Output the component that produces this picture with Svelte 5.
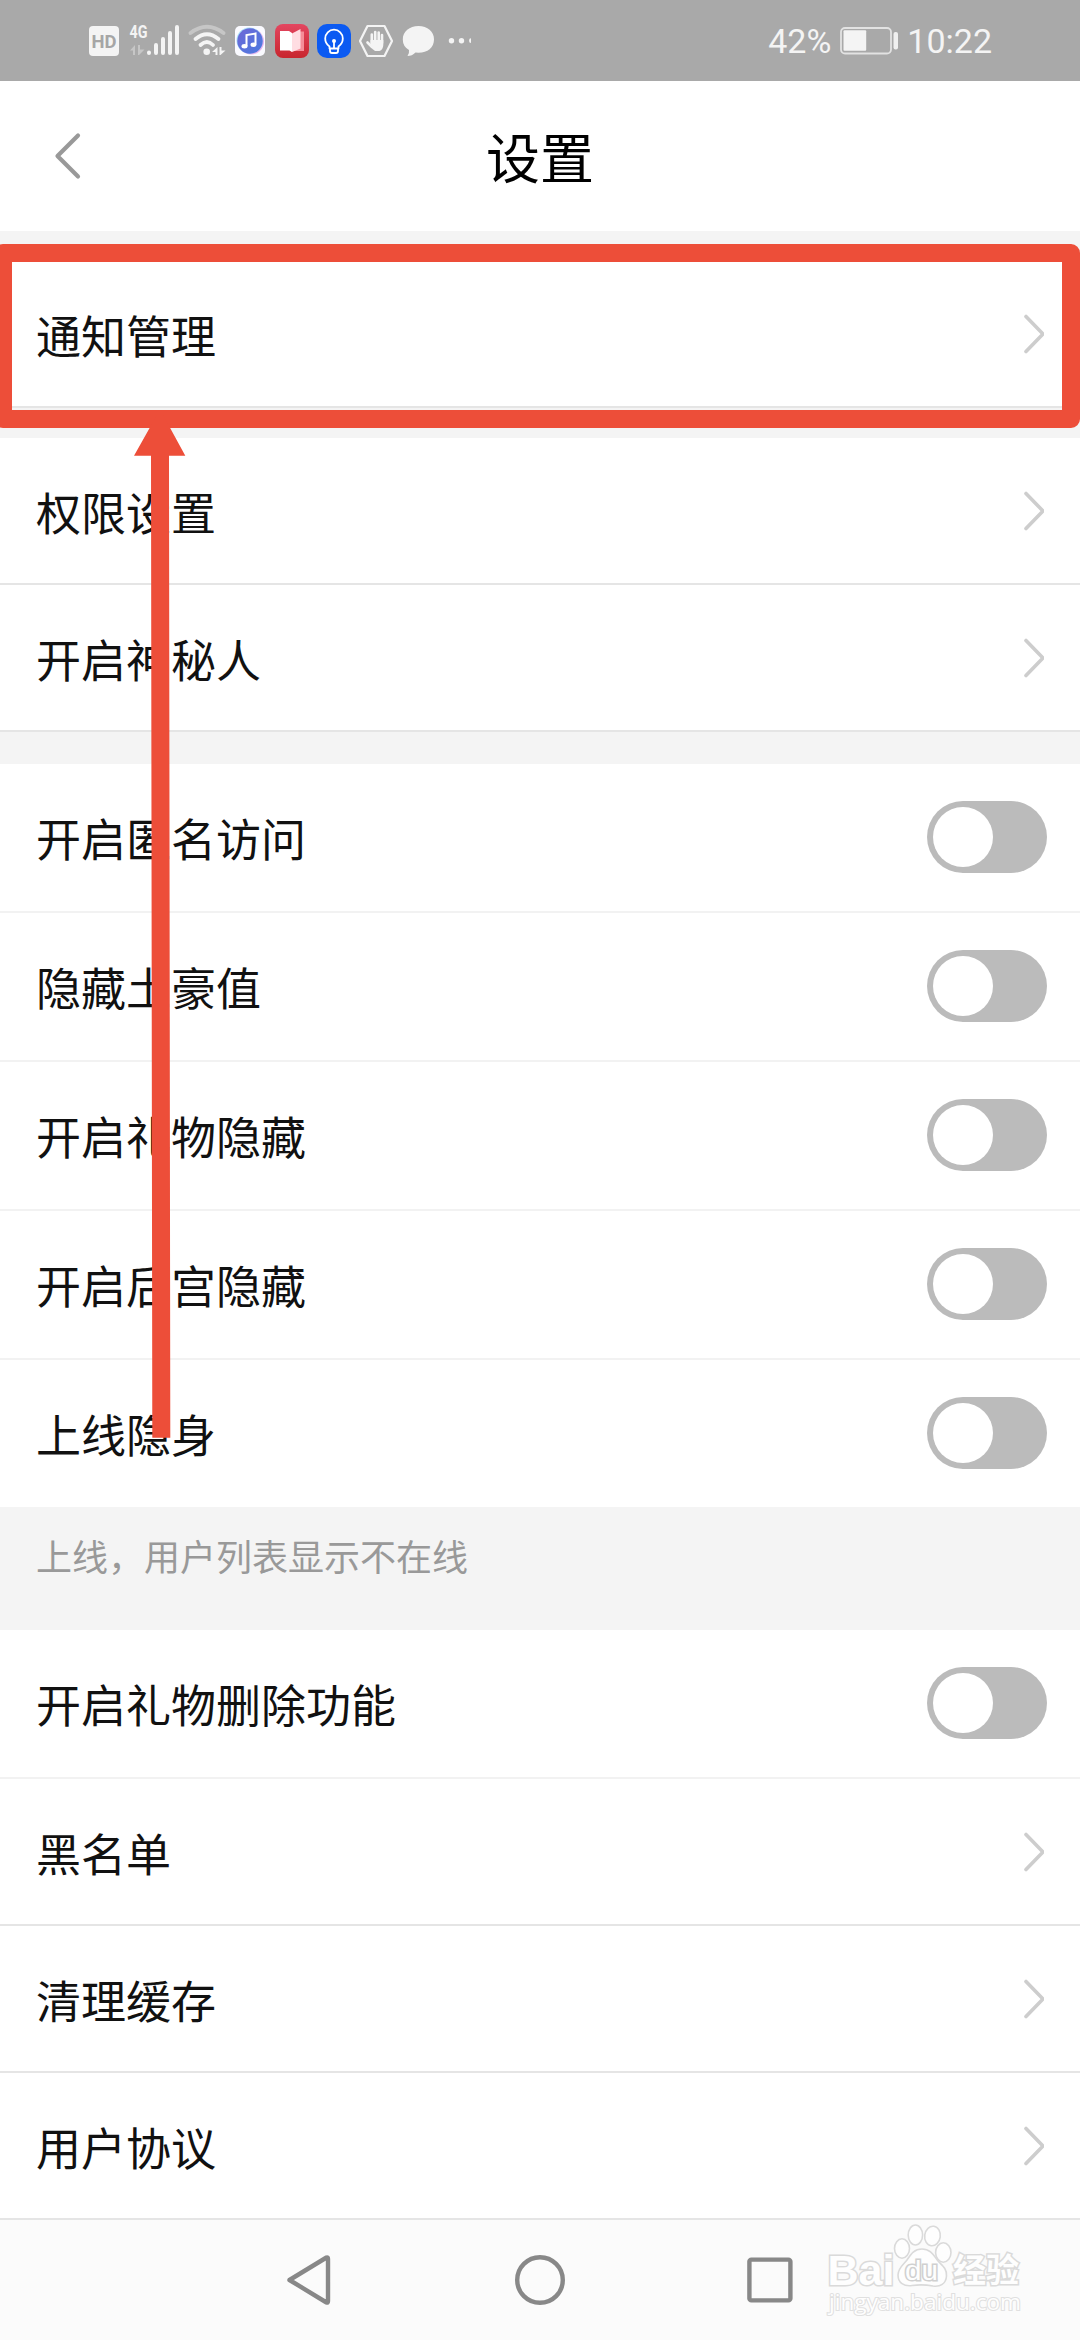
<script lang="ts">
  type Row = { label: string; kind: 'link' | 'switch' };

  const notifyRows: Row[] = [{ label: '通知管理', kind: 'link' }];

  const accessRows: Row[] = [
    { label: '权限设置', kind: 'link' },
    { label: '开启神秘人', kind: 'link' },
  ];

  const privacyRows: Row[] = [
    { label: '开启匿名访问', kind: 'switch' },
    { label: '隐藏土豪值', kind: 'switch' },
    { label: '开启礼物隐藏', kind: 'switch' },
    { label: '开启后宫隐藏', kind: 'switch' },
    { label: '上线隐身', kind: 'switch' },
  ];

  const otherRows: Row[] = [
    { label: '开启礼物删除功能', kind: 'switch' },
    { label: '黑名单', kind: 'link' },
    { label: '清理缓存', kind: 'link' },
    { label: '用户协议', kind: 'link' },
  ];

  let enabled = $state<Record<string, boolean>>({});

  function toggle(label: string) {
    enabled[label] = !enabled[label];
  }
</script>

{#snippet rowList(rows: Row[])}
  {#each rows as row (row.label)}
    <div class="row {row.kind}">
      <span class="label">{row.label}</span>
      {#if row.kind === 'switch'}
        <button
          class="switch"
          class:on={enabled[row.label]}
          type="button"
          role="switch"
          aria-checked={!!enabled[row.label]}
          aria-label={row.label}
          onclick={() => toggle(row.label)}
        >
          <span class="knob"></span>
        </button>
      {:else}
        <svg class="chevron" width="20" height="40" viewBox="0 0 20 40">
          <path d="M2 2.5 L19 20 L2 37.5" fill="none" stroke="#cdcdcd" stroke-width="3.6" stroke-linecap="round" />
        </svg>
      {/if}
    </div>
  {/each}
{/snippet}

<div class="screen">
  <!-- Status bar -->
  <div class="status-bar">
    <div class="status-icons">
      <svg width="31" height="40" viewBox="89 21 31 40">
        <rect x="89" y="26" width="30" height="30" rx="4" fill="#f4f4f4" />
        <text x="91.5" y="48.2" font-size="19" font-weight="700" fill="#a6a6a6" textLength="25" lengthAdjust="spacingAndGlyphs">HD</text>
      </svg>
      <svg width="52" height="40" viewBox="128 21 52 40">
        <text x="129.5" y="38" font-size="18" font-weight="700" fill="#f4f4f4" textLength="18" lengthAdjust="spacingAndGlyphs">4G</text>
        <path d="M130 50.5 L135 45 V55 H133 V50.5 Z M138 45 H140 V49.5 H144.5 L139 55 H138 Z" fill="#c6c6c6" />
        <g stroke="#f4f4f4" stroke-width="4" stroke-linecap="round">
          <path d="M149 52.5 V53 M156 45 V53 M163 39 V53 M170 33 V53 M177 27 V53" />
        </g>
      </svg>
      <svg width="38" height="40" viewBox="188 21 38 40">
        <g fill="none" stroke-width="3.8" stroke-linecap="round">
          <path d="M190.5 33 Q207 20.5 223.5 33" stroke="#c6c6c6" />
          <path d="M195.5 39 Q207 29.5 218.5 39" stroke="#f4f4f4" />
          <path d="M200.500 45 Q207 39 213 45" stroke="#f4f4f4" />
        </g>
        <circle cx="206.7" cy="51.8" r="3.3" fill="#f4f4f4" />
        <path d="M212 52 L217.5 47 V55 H215.5 V52 Z M219.5 47 H221.500 V50.5 H225.5 L220.5 55 H219.5 Z" fill="#f4f4f4" />
      </svg>
      <svg width="32" height="40" viewBox="234 21 32 40">
        <defs>
          <linearGradient id="disc" x1="0" y1="0" x2="1" y2="1">
            <stop offset="0" stop-color="#6f66d6" />
            <stop offset="1" stop-color="#4a7be0" />
          </linearGradient>
        </defs>
        <rect x="235" y="26" width="30" height="30" rx="5" fill="#fafaff" />
        <circle cx="251" cy="41.5" r="13" fill="#e7b4ee" />
        <circle cx="249.5" cy="40.5" r="13" fill="#a5dcf5" />
        <circle cx="250" cy="41" r="12.7" fill="url(#disc)" />
        <path d="M246.5 46 V35 L255.500 33.5 V44.5" fill="none" stroke="#fff" stroke-width="2" />
        <ellipse cx="244.5" cy="46.3" rx="3" ry="2.2" fill="#fff" />
        <ellipse cx="253.5" cy="44.8" rx="3" ry="2.2" fill="#fff" />
      </svg>
      <svg width="35" height="40" viewBox="274 21 35 40">
        <defs>
          <linearGradient id="cover" x1="0" y1="0" x2="0" y2="1">
            <stop offset="0" stop-color="#e34660" />
            <stop offset="1" stop-color="#c8262e" />
          </linearGradient>
        </defs>
        <rect x="275" y="24" width="34" height="34" rx="8" fill="url(#cover)" />
        <path d="M300 31.5 H304 V51 H293 Z" fill="#f58d98" />
        <path d="M280 31 H289 L292 33 V52 L289.5 50.5 H280 Z" fill="#fff" />
        <path d="M292 33.5 L300.5 29 V48.5 L292 52 Z" fill="#ffdde2" />
      </svg>
      <svg width="34" height="40" viewBox="317 21 34 40">
        <rect x="317" y="24" width="34" height="34" rx="10" fill="#0b5af2" />
        <g fill="none" stroke="#fff" stroke-width="1.8" stroke-linecap="round" stroke-linejoin="round">
          <path d="M329.500 48.5 V46.5 Q325.2 43.5 325.2 38.5 A8.8 8.8 0 0 1 342.8 38.5 Q342.8 43.5 338.5 46.5 V48.5 Z" />
          <path d="M330 49 V51 Q330 53 332 53 H336 Q338 53 338 51 V49 M334 48 V42" />
        </g>
        <circle cx="334" cy="41" r="2" fill="#fff" />
      </svg>
      <svg width="34" height="40" viewBox="359 21 34 40">
        <path d="M367.5 26 H384.5 L392 41 L384.5 56 H367.5 L360 41 Z" fill="none" stroke="#f4f4f4" stroke-width="2.2" stroke-linejoin="round" />
        <g fill="none" stroke="#f4f4f4" stroke-width="2.6" stroke-linecap="round">
          <path d="M371.8 43 V34.5 M375.2 42 V32 M378.7 42 V32.5 M382 43 V35" />
          <path d="M372 47 L367.5 42.500" />
        </g>
        <path d="M370.5 40 H383.3 V45 Q383 50 379.5 51 H375 Q372.5 50 370.5 46 Z" fill="#f4f4f4" />
      </svg>
      <svg width="34" height="40" viewBox="401 21 34 40">
        <path d="M418.5 26 C427.5 26 434 31.5 434 39.5 C434 47.5 427.5 52.8 418.5 52.8 L415.5 52.5 Q412 56 407.5 56 Q409.5 53.5 409 50 Q402.8 46.5 402.8 39.5 C402.8 31.5 409.5 26 418.5 26 Z" fill="#f4f4f4" />
      </svg>
      <svg width="28" height="40" viewBox="443 21 28 40">
        <circle cx="451.5" cy="40.7" r="2.7" fill="#f4f4f4" />
        <circle cx="461.5" cy="40.7" r="2.7" fill="#f4f4f4" />
        <path d="M471 38.3 Q469 38.3 469 40.7 Q469 43 471 43 Z" fill="#f4f4f4" />
      </svg>
    </div>
    <div class="status-info">
      <span>42%</span>
      <svg width="60" height="40" viewBox="839 21 60 40">
        <rect x="841" y="28" width="50" height="25.5" rx="4" fill="none" stroke="#e2e2e2" stroke-width="1.8" />
        <rect x="843.5" y="30.3" width="22.7" height="20.5" rx="1" fill="#f4f4f4" />
        <rect x="893.5" y="32" width="4.5" height="17.5" rx="2" fill="#f0f0f0" />
      </svg>
      <span>10:22</span>
    </div>
  </div>

  <!-- Header -->
  <header class="header">
    <button class="back" type="button" aria-label="返回">
      <svg width="30" height="50" viewBox="0 0 30 50">
        <path d="M24 4.5 L3.5 25 L24 45.5" fill="none" stroke="#999" stroke-width="4.2" stroke-linecap="round" stroke-linejoin="round" />
      </svg>
    </button>
    <h1>设置</h1>
  </header>

  <!-- Settings -->
  <main>
    <section class="group">{@render rowList(notifyRows)}</section>
    <section class="group">{@render rowList(accessRows)}</section>
    <section class="group privacy">{@render rowList(privacyRows)}</section>
    <p class="hint">上线，用户列表显示不在线</p>
    <section class="group">{@render rowList(otherRows)}</section>
  </main>

  <!-- System navigation -->
  <nav class="nav-bar">
    <svg width="50" height="54" viewBox="285 2253 50 54">
      <path d="M289.5 2280 L326.5 2257.5 Q328 2257 328 2259 V2301 Q328 2303 326.5 2302.5 Z" />
    </svg>
    <svg width="54" height="54" viewBox="513 2253 54 54">
      <circle cx="540" cy="2280" r="22.8" />
    </svg>
    <svg width="50" height="54" viewBox="745 2253 50 54">
      <rect x="749.4" y="2259.6" width="41" height="40.8" rx="2" />
    </svg>
  </nav>

  <!-- Highlight frame and arrow -->
  <svg class="marker" width="1080" height="1450" viewBox="0 0 1080 1450">
    <rect x="3" y="253" width="1068" height="166" fill="none" stroke="#ed4e39" stroke-width="18" stroke-linejoin="round" />
    <path d="M157.5 414 H162.5 L185.3 455.7 H169 L170.3 1437.7 H152.3 L151 455.7 H134 Z" fill="#ed4e39" />
  </svg>

  <!-- Watermark -->
  <svg class="watermark" width="210" height="100" viewBox="820 2220 210 100">
    <g class="mark">
      <text x="827.5" y="2284.5" font-size="43" font-weight="700" textLength="67" lengthAdjust="spacingAndGlyphs">Bai</text>
      <ellipse cx="902" cy="2248.5" rx="7.5" ry="9.7" />
      <ellipse cx="915.4" cy="2235" rx="7.2" ry="10" />
      <ellipse cx="932.5" cy="2236" rx="7.8" ry="9.8" transform="rotate(8 932.5 2236)" />
      <ellipse cx="943.3" cy="2252.5" rx="7.7" ry="9.7" />
      <path d="M922 2249 C931 2249 934 2256 938 2261 C943 2266 947 2269 946.5 2276 C946 2284 940 2287 933 2286 C925 2284.5 919 2284.5 912 2285.5 C904 2286.5 898 2283 898 2275 C898 2268 903 2265 907 2260 C911 2254 914 2249 922 2249 Z" />
      <text class="du" x="905" y="2280" font-size="27" textLength="33" lengthAdjust="spacingAndGlyphs">du</text>
      <text class="cjk" x="953" y="2281.5" font-size="33" font-weight="700" textLength="66">经验</text>
      <text class="url" x="829" y="2310" font-size="21" textLength="192" lengthAdjust="spacingAndGlyphs">jingyan.baidu.com</text>
    </g>
  </svg>
</div>

<style>
  :global(body) {
    margin: 0;
    background: #f4f4f4;
  }

  .screen {
    position: relative;
    display: flex;
    flex-direction: column;
    width: 1080px;
    height: 2340px;
    overflow: hidden;
    background: #f4f4f4;
    font-family: 'Noto Sans CJK SC', sans-serif;
    color: #111;
  }

  svg {
    display: block;
    flex: none;
  }

  /* Status bar */
  .status-bar {
    box-sizing: border-box;
    display: flex;
    align-items: center;
    justify-content: space-between;
    height: 81px;
    padding: 1px 88px 0 89px;
    background: #a9a9a9;
    color: #f4f4f4;
    font-family: Roboto, sans-serif;
    font-size: 34px;
  }

  .status-icons {
    display: flex;
    gap: 8px;
  }

  .status-info {
    display: flex;
    align-items: center;
    gap: 8px;
  }

  /* Header */
  .header {
    display: grid;
    grid-template-columns: 120px 1fr 120px;
    align-items: center;
    height: 150px;
    margin-bottom: 30px;
    background: #fff;
  }

  .back {
    justify-self: start;
    margin-left: 54px;
    padding: 0;
    border: none;
    background: none;
    cursor: pointer;
  }

  h1 {
    margin: 0;
    font-size: 54px;
    font-weight: 400;
    line-height: 80px;
    text-align: center;
    color: #000;
  }

  /* Rows */
  .group {
    margin-bottom: 30px;
    background: #fff;
  }

  .row {
    box-sizing: border-box;
    display: flex;
    align-items: center;
    justify-content: space-between;
    height: 147px;
    padding: 0 36px;
    border-bottom: 2px solid #e5e5e5;
  }

  .row.switch {
    height: 149px;
    padding-right: 33px;
    border-bottom-color: #f2f2f2;
  }

  .label {
    font-size: 45px;
    line-height: 66px;
  }

  .link .label {
    padding-top: 2px;
  }

  .group.privacy {
    margin: 32px 0 0;
  }

  .privacy .row:last-child {
    height: 147px;
    border-bottom: none;
  }

  .hint {
    box-sizing: border-box;
    height: 123px;
    margin: 0;
    padding: 22px 36px 0;
    font-size: 36px;
    line-height: 52px;
    color: #999;
  }

  button.switch {
    width: 120px;
    height: 72px;
    margin-bottom: 1px;
    padding: 6px;
    border: none;
    border-radius: 36px;
    background: #bbb;
    cursor: pointer;
  }

  .knob {
    display: block;
    width: 60px;
    height: 60px;
    border-radius: 50%;
    background: #fff;
    transition: transform 200ms ease;
  }

  button.switch.on {
    background: #4cd964;
  }

  .on .knob {
    transform: translateX(48px);
  }

  main .group:last-child {
    margin-bottom: 0;
  }

  /* System navigation */
  .nav-bar {
    display: grid;
    grid-template-columns: repeat(3, 230px);
    place-content: center;
    place-items: center;
    height: 120px;
    background: #fbfbfb;
  }

  .nav-bar svg {
    fill: none;
    stroke: #888;
    stroke-width: 4.4;
    stroke-linejoin: round;
  }

  /* Overlays */
  .marker {
    position: absolute;
    top: 0;
    left: 0;
    pointer-events: none;
  }

  .watermark {
    position: absolute;
    right: 50px;
    bottom: 20px;
    pointer-events: none;
  }

  .mark {
    fill: #fefefe;
    stroke: #dadada;
    stroke-width: 1.6;
    font-family: 'Liberation Sans', sans-serif;
  }

  .mark text {
    paint-order: stroke;
    stroke-width: 3;
  }

  .mark .du {
    stroke: #d0d0d0;
  }

  .mark .cjk {
    font-family: 'Noto Sans CJK SC', sans-serif;
  }

  .mark .url {
    font-family: 'Open Sans', sans-serif;
    stroke: #e0e0e0;
    stroke-width: 2;
  }
</style>
